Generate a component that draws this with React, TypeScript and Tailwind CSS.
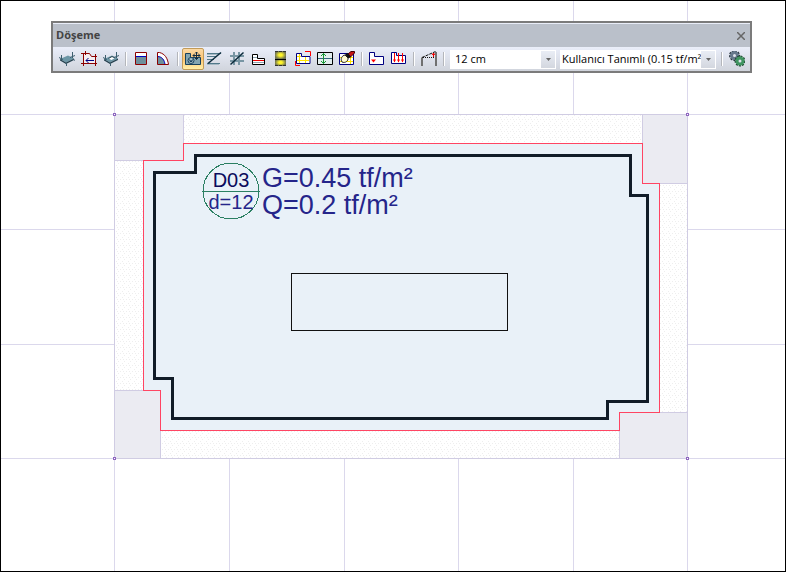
import { useState, type ReactNode } from "react"

const UI_FONT = "font-['Open_Sans','Noto_Sans',sans-serif]"
const NAVY = "#000080"
const RED = "#ff0000"

const ICONS: Record<string, ReactNode> = {
  slab: (
    <>
      <path d="M1 8L9 4.5L15 7.5L7 11.5Z" fill="#6d97a6" />
      <path d="M1 8V9.5L7 13V11.5ZM7 11.5V13L15 9V7.5Z" fill="#24414f" />
      <path d="M2.500 4V9M0 6.500L4 8.500M13.500 1V7M11 6.500L16 4.500M7.500 12V15M14 8L16 9.500" stroke="#3d5f6f" fill="none" />
    </>
  ),
  slabEdge: (
    <>
      <path d="M2.500 2.500H8.500L10.500 5.500H14.500V12.500H2.500Z" fill="#f4eef2" stroke="#8b0000" />
      <path d="M4.500 0V4M0 2.500H3M14.500 3V6M12 5.500H16M2.500 12V15M0 12.500H5M14.500 11V15M12 12.500H16" stroke="#8b0000" fill="none" />
      <path d="M5 9.500H13M7.500 7L5 9.500L7.500 12" stroke={NAVY} fill="none" />
    </>
  ),
  slabHole: (
    <>
      <path d="M1 8L9 4.5L15 7.5L7 11.5Z" fill="#6d97a6" />
      <path d="M1 8V9.5L7 13V11.5ZM7 11.5V13L15 9V7.5Z" fill="#24414f" />
      <path d="M5.500 7.500L9 5.500L12 7L8.500 9Z" fill="#fff" />
      <path d="M5.500 7.500L9 5.500L12 7" stroke="#24414f" fill="none" />
      <path d="M2.500 4V9M0 6.500L4 8.500M13.500 1V7M11 6.500L16 4.500M7.500 12V15" stroke="#3d5f6f" fill="none" />
    </>
  ),
  balcony: (
    <>
      <path d="M2.500 1.500H13.500V13.500H2.500Z" fill="#fff" stroke="#8b0000" />
      <path d="M3 5H13V13H3Z" fill="#6d8f9b" />
      <path d="M3 5.500H13" stroke="#0000c0" />
    </>
  ),
  arc: (
    <>
      <path d="M2.500 13.500V1.500H4.500C10 3 12.500 7 13.500 13.500Z" fill="#fff" />
      <path d="M2.500 5.500C7 5.500 9.500 9 10 13.500H2.500Z" fill="#6d8f9b" />
      <path d="M2.500 5.500C7 5.500 9.500 9 10 13.500" stroke="#0000c0" fill="none" />
      <path d="M2.500 13.500V1.500H4.500C10 3 12.500 7 13.500 13.500Z" fill="none" stroke="#8b0000" />
    </>
  ),
  label: (
    <>
      <path d="M.5 2.500H5.500V6.500H15.500V13.500H.5Z" fill="#83a5b0" stroke="#17405c" />
      <circle cx="6" cy="9.500" r="3" fill="#a9c0c7" stroke="#17405c" />
      <path d="M4.500 8.500L5.500 11L6 9.500L6.500 11L7.500 8.500" stroke="#17405c" fill="none" />
      <path d="M11.500 1V8.500M8 4.500H15M10 2.500L11.500 1L13 2.500M9.500 3L8 4.500L9.500 6M13.500 3L15 4.500L13.500 6M10 7L11.500 8.500L13 7" stroke="#122c42" fill="none" />
    </>
  ),
  oneWay: (
    <>
      <path d="M0 2.500H14M0 5.500H10M0 8.500H7M0 12.500H13" stroke="#52798a" />
      <path d="M0 3.500H12M0 13.500H12" stroke="#a5b9c4" />
      <path d="M1 12.500L14 1.500" stroke="#0b2b3c" strokeWidth="1.500" />
    </>
  ),
  twoWay: (
    <>
      <path d="M5 1V14M10 1V14M1 5H15M1 10H15" stroke="#7896a4" strokeWidth="2" />
      <path d="M1.500 13.500L14.500 1.500" stroke="#0b2b3c" strokeWidth="1.500" />
    </>
  ),
  section: (
    <>
      <path d="M1.500 3.500H6.500V7.500H13.500V13.500H1.500Z" fill="#fff" stroke="#000" />
      <path d="M2 6.500H6M2 11.500H13" stroke="#8ba4b0" />
      <path d="M2 9.500H13" stroke="#e00" />
    </>
  ),
  lit: (
    <>
      <defs>
        <radialGradient id="glow">
          <stop offset="0.300" stopColor="#fff52a" />
          <stop offset="1" stopColor="#6f7350" />
        </radialGradient>
      </defs>
      <rect x="2" width="11" height="15" fill="#6f7350" />
      <rect x="2" width="11" height="8" fill="url(#glow)" />
      <rect x="2" y="8" width="11" height="7" fill="url(#glow)" />
      <path d="M2 .5H13M2 14.500H13" stroke="#333" strokeDasharray="3 1" />
      <path d="M2 8.500H13" stroke="#000" />
    </>
  ),
  mesh: (
    <>
      <path d="M1.500 2.500H6.500V5.500H15V12.500H1.500Z" fill="#fff" stroke={NAVY} />
      <path d="M2 5.500H6M2 9.500H14M4.500 3V12M10.500 6V12" stroke="#ffe400" />
      <path d="M10 .5H15.500V5M.5 10V14.500H5" stroke={RED} fill="none" />
    </>
  ),
  span: (
    <>
      <path d="M.5 1.500H15.500V13.500H.5Z" fill="#e3eeee" stroke="#000" />
      <path d="M1 7.500H15" stroke="#34667a" />
      <path d="M6.500 2.500V12.500M4 5L6.500 2.500L9 5M4 10L6.500 12.500L9 10" stroke="#149632" fill="none" />
    </>
  ),
  brush: (
    <>
      <path d="M.5 2.500H14.500V13.500H.5Z" fill="#fff" stroke={NAVY} />
      <path d="M1 6.500H14M1 10.500H14M11.500 3V13" stroke="#ffe400" />
      <path d="M9 3L12 .5H15.500V2L11 6.500Z" fill="#c91414" stroke="#400" />
      <path d="M6 3.500L8.500 2L12 5.500L9.500 7.500Z" fill="#111" />
      <path d="M6 4L9 7C9.500 10 6 12.500 3 11C1 8 3 4.500 6 4Z" fill="#fffbd0" stroke="#222" />
    </>
  ),
  pointLoad: (
    <>
      <path d="M.5 1.500H5.500V5.500H14.500V13.500H.5Z" fill="#fff" stroke={NAVY} />
      <path d="M2 8.500H7L4.500 11.500Z" fill={RED} />
    </>
  ),
  areaLoad: (
    <>
      <path d="M.5 1.500H5.500V4.500H14.500V12.500H.5Z" fill="#fff" stroke={NAVY} />
      <path d="M3.500 2V11M7.500 2V11M11.500 2V11" stroke={RED} />
      <path d="M2 8.500H5L3.500 11.500ZM6 8.500H9L7.500 11.500ZM10 8.500H13L11.500 11.500Z" fill={RED} />
    </>
  ),
  ramp: (
    <>
      <path d="M1 15V6.500M15 15V1" stroke="#707070" strokeWidth="2" />
      <path d="M1 6.500L14.500 .5" stroke="#111" strokeDasharray="3 1" />
      <path d="M2 6.500H14" stroke="#111" strokeDasharray="1 1" />
      <path d="M12.500 6V2M11 4L12.500 2L14 4" stroke="#e00" fill="none" />
    </>
  ),
  gears: (
    <>
      <circle cx="5.500" cy="4.500" r="4.500" fill="none" stroke="#26323d" strokeWidth="2" strokeDasharray="2 1" />
      <circle cx="5.500" cy="4.500" r="3" fill="#dfe3ec" stroke="#66788c" strokeWidth="3" />
      <circle cx="11" cy="10" r="4.500" fill="none" stroke="#1d4b30" strokeWidth="2" strokeDasharray="2 1" />
      <circle cx="11" cy="10" r="3" fill="#dfe3ec" stroke="#3f9560" strokeWidth="3" />
    </>
  ),
}

// null entries are separators
const TOOLS: ([string, string] | null)[] = [
  ["slab", "Döşeme"],
  ["slabEdge", "Döşeme kenarı"],
  ["slabHole", "Döşeme boşluğu"],
  null,
  ["balcony", "Konsol döşeme"],
  ["arc", "Dairesel döşeme"],
  null,
  ["label", "Döşeme etiketi"],
  ["oneWay", "Tek yön donatı"],
  ["twoWay", "Çift yön donatı"],
  ["section", "Kesit"],
  ["lit", "Şerit"],
  ["mesh", "Hasır donatı"],
  ["span", "Açıklık"],
  ["brush", "Özellik kopyala"],
  null,
  ["pointLoad", "Tekil yük"],
  ["areaLoad", "Yayılı yük"],
  null,
  ["ramp", "Eğim"],
  null,
]

function Separator() {
  return (
    <span className="flex h-3.5 w-2 shrink-0 justify-center">
      <span className="w-px bg-[#b4b6bb]" />
      <span className="w-px bg-white" />
    </span>
  )
}

function ToolButton({ icon, title, active, onClick }: { icon: string; title: string; active?: boolean; onClick?: () => void }) {
  return (
    <button
      type="button"
      aria-label={title}
      onClick={onClick}
      className={`flex size-[22px] shrink-0 items-center justify-center ${
        active ? "rounded-xs border border-[#c29b58] bg-linear-to-b from-[#fbd9a4] via-[#fcc36f] to-[#fff0a8]" : ""
      }`}
    >
      <svg viewBox="0 0 16 16" className="size-4 shrink-0" aria-hidden="true">
        {ICONS[icon]}
      </svg>
    </button>
  )
}

function Combo({ label, options, className }: { label: string; options: string[]; className: string }) {
  return (
    <div className={`relative h-[19px] bg-white ${className}`}>
      <select aria-label={label} className="block h-full w-full appearance-none overflow-hidden bg-transparent pr-3.5 text-[11px] text-black outline-none">
        {options.map((o) => <option key={o}>{o}</option>)}
      </select>
      <span className="pointer-events-none absolute inset-y-px right-px flex w-3.5 items-center justify-center bg-linear-to-b from-[#e9edf5] to-[#d3d7df]">
        <svg viewBox="0 0 5 3" className="h-[3px] w-[5px]" aria-hidden="true"><path d="M0 0H5L2.500 3Z" fill="#666" /></svg>
      </span>
    </div>
  )
}

function Toolbar() {
  const [active, setActive] = useState("label")
  const [open, setOpen] = useState(true)
  if (!open) return null

  return (
    <section className={`absolute left-[50px] top-5 border-2 border-[#7b7b7b] bg-[#e9edf8] pt-px ${UI_FONT}`}>
      <header className="flex h-[23px] items-center justify-between bg-[#bac0ca] pl-[3px] pr-[3px]">
        <h1 className="text-[11px] font-bold text-[#444]">Döşeme</h1>
        <button type="button" aria-label="Kapat" onClick={() => setOpen(false)} className="p-0.5">
          <svg viewBox="0 0 8 8" className="size-2" aria-hidden="true"><path d="M0 0L8 8M8 0L0 8" stroke="#666" strokeWidth="1.500" /></svg>
        </button>
      </header>
      <div className="flex h-6 items-center bg-linear-to-b from-[#eaeefa] to-[#d0d4dc] pl-[3px] pr-0.5">
        {TOOLS.map((tool, i) =>
          tool ? (
            <ToolButton key={tool[0]} icon={tool[0]} title={tool[1]} active={active === tool[0]} onClick={() => setActive(tool[0])} />
          ) : (
            <Separator key={i} />
          )
        )}
        <Combo label="Kalınlık" options={["12 cm", "15 cm", "20 cm"]} className="ml-0.5 mr-1 w-[106px] pl-[5px]" />
        <Combo label="Yük tipi" options={["Kullanıcı Tanımlı (0.15 tf/m²"]} className="mr-0.5 w-[156px] pl-0.5" />
        <Separator />
        <ToolButton icon="gears" title="Ayarlar" />
      </div>
    </section>
  )
}

const GRID_X = [114, 229, 344, 458, 573, 687]
const GRID_Y = [114, 229, 344, 458]
const COLUMNS = [
  { x: 114, y: 114, w: 69, h: 46 },
  { x: 642, y: 114, w: 45, h: 69 },
  { x: 114, y: 390, w: 46, h: 68 },
  { x: 619, y: 412, w: 68, h: 46 },
]

function Plan() {
  return (
    <svg viewBox="1 1 784 570" className="block h-full w-full font-['Liberation_Sans',Arial,sans-serif]" role="img" aria-label="D03 döşeme planı">
      <defs>
        <pattern id="hatch" width="6" height="6" patternUnits="userSpaceOnUse">
          <path d="M0 5h1v1h-1zM2 3h1v1h-1zM4 1h1v1h-1zM3 5h1v1h-1z" fill="#777" fillOpacity=".12" />
        </pattern>
      </defs>
      <g shapeRendering="crispEdges">
        <g stroke="#dbd8ec">
          {GRID_X.map((x) => <path key={x} d={`M${x + 0.5} 0V572`} />)}
          {GRID_Y.map((y) => <path key={y} d={`M0 ${y + 0.5}H786`} />)}
        </g>
        <path d="M114.500 114.500H687.500V458.500H114.500Z" fill="#fff" />
        <path d="M114.500 114.500H687.500V458.500H114.500Z" fill="url(#hatch)" stroke="#d0cce3" />
        {COLUMNS.map((c) => (
          <rect key={`${c.x}-${c.y}`} x={c.x + 0.5} y={c.y + 0.5} width={c.w} height={c.h} fill="#ebebf2" stroke="#d0cce3" />
        ))}
        <path
          d="M183.500 143.500H642.500V183.500H659.500V412.500H619.500V430.500H160.500V390.500H143.500V160.500H183.500Z"
          fill="#e9f1f8"
          stroke="#ff4563"
        />
        <path
          d="M195.500 155.500H630.500V195.500H647.500V401.500H607.500V418.500H172.500V378.500H154.500V172.500H195.500Z"
          fill="none"
          stroke="#111c28"
          strokeWidth="3"
        />
        <path d="M291.500 273.500H507.500V330.500H291.500Z" fill="none" stroke="#111" />
        {[114, 687].map((x) => [114, 458].map((y) => (
          <rect key={`${x}-${y}`} x={x - 0.5} y={y - 0.5} width="2" height="2" fill="#fff" stroke="#8f66c0" />
        )))}
        <circle cx="231" cy="191" r="28" fill="none" stroke="#2c8063" />
        <path d="M202 191.500H260" stroke="#2c8063" />
      </g>
      <g fontSize="20" textAnchor="middle">
        <text x="231" y="187" fill="#0b0b5c">D03</text>
        <text x="231" y="209" fill="#25258a">d=12</text>
      </g>
      <g fontSize="27" fill="#25258a">
        <text x="262" y="187">G=0.45 tf/m²</text>
        <text x="262" y="214">Q=0.2 tf/m²</text>
      </g>
    </svg>
  )
}

export default function App() {
  return (
    <main className="relative h-screen w-full overflow-hidden border border-black bg-white">
      <Plan />
      <Toolbar />
    </main>
  )
}
